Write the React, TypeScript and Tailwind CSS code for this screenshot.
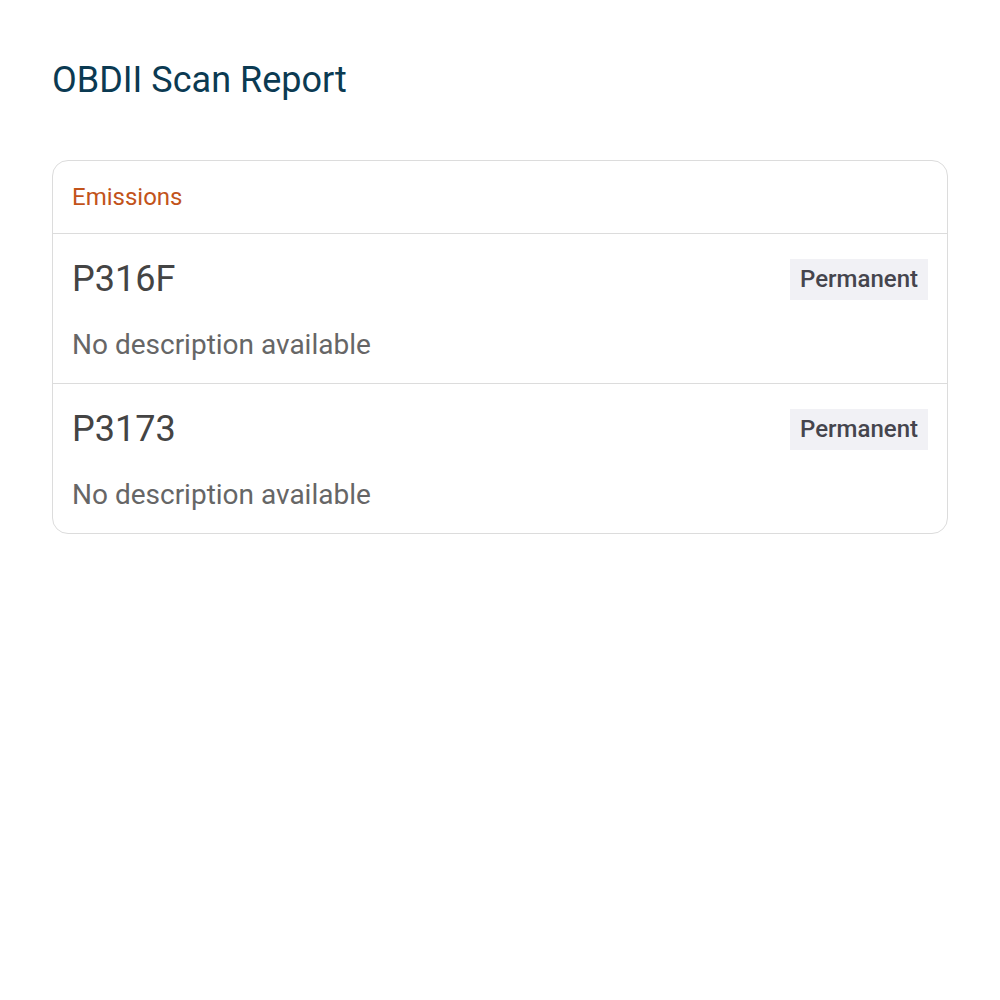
import React from "react";

const codes = [
  { code: "P316F", status: "Permanent", description: "No description available" },
  { code: "P3173", status: "Permanent", description: "No description available" },
];

export default function App() {
  return (
    <div className="min-h-screen bg-white px-[52px] pt-[58px] font-['Roboto',sans-serif]">
      <h1 className="text-[36px] leading-[44px] text-[#0b3a52]">OBDII Scan Report</h1>
      <div className="mt-[58px] rounded-2xl border border-[#dcdcdc] overflow-hidden">
        <div className="px-[19px] h-[73px] flex items-center border-b border-[#dcdcdc]">
          <span className="text-[24px] text-[#c2531a]">Emissions</span>
        </div>
        {codes.map((c, i) => (
          <div
            key={i}
            className={
              "px-[19px] pt-6 pb-[21px] flex flex-col gap-[28px] " +
              (i < codes.length - 1 ? "border-b border-[#dcdcdc]" : "")
            }
          >
            <div className="flex items-center justify-between">
              <span className="text-[36px] leading-[42px] text-[#444]">{c.code}</span>
              <span className="bg-[#f1f1f5] px-[10px] py-[6px] text-[24px] leading-[29px] font-medium text-[#45454d]">
                {c.status}
              </span>
            </div>
            <p className="text-[28px] leading-[34px] text-[#666]">{c.description}</p>
          </div>
        ))}
      </div>
    </div>
  );
}
